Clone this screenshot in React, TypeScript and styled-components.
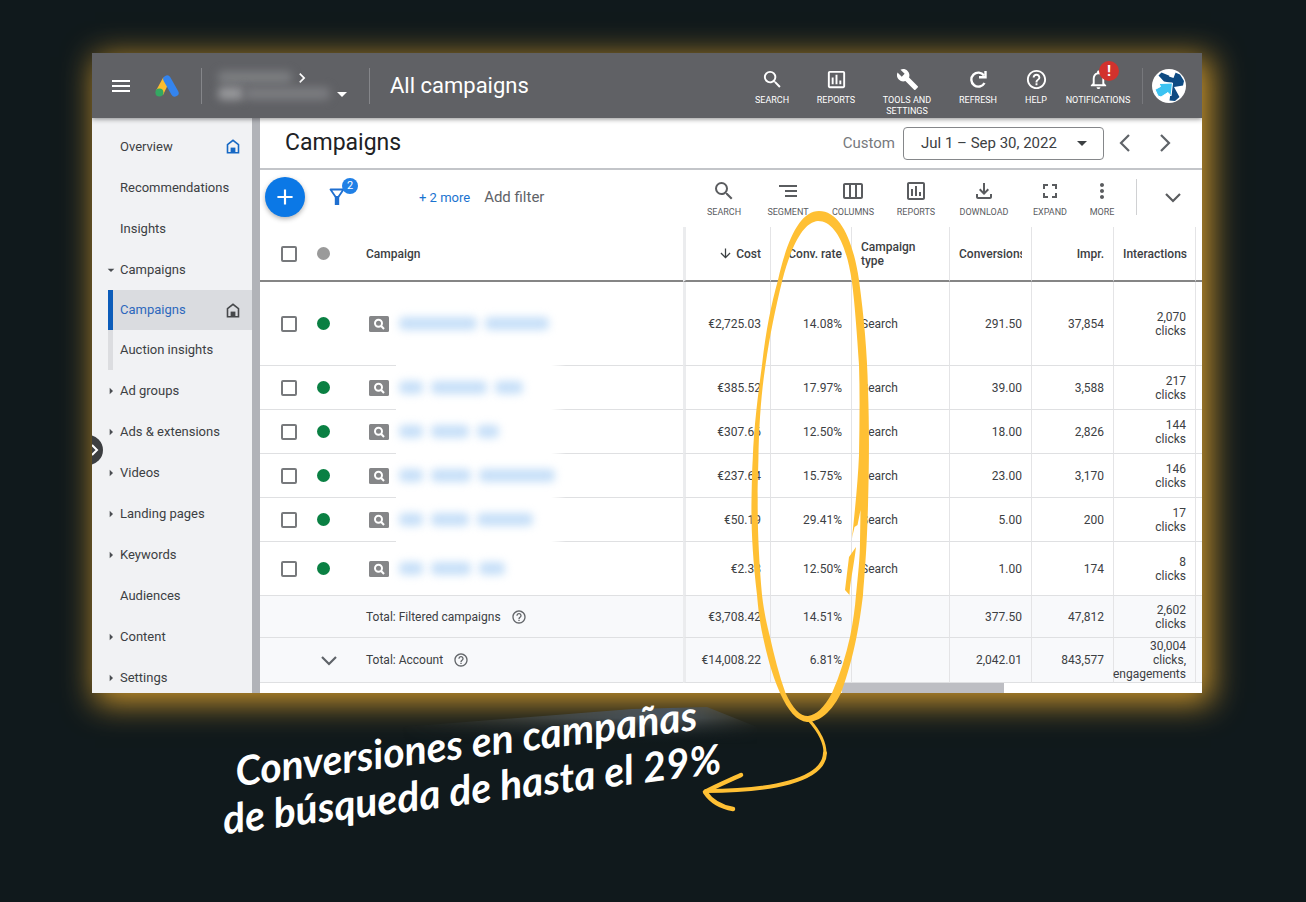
import React from "react";
import styled, { createGlobalStyle, css } from "styled-components";
import {
  MdSearch,
  MdOutlineAssessment,
  MdBuild,
  MdHelpOutline,
  MdNotificationsNone,
  MdSegment,
  MdOutlineViewWeek,
  MdOutlineFileDownload,
  MdFullscreen,
  MdMoreVert,
  MdChevronRight,
  MdArrowDropDown,
  MdArrowRight,
  MdArrowDownward,
  MdAdd,
  MdMenu,
} from "react-icons/md";

const GlobalStyle = createGlobalStyle`
  *, *::before, *::after { box-sizing: border-box; }
  body {
    margin: 0;
    background: #10191c;
    font-family: Roboto, "Liberation Sans", sans-serif;
    color: #3c4043;
  }
  button { font: inherit; color: inherit; background: none; border: 0; padding: 0; cursor: pointer; }
  a { color: inherit; text-decoration: none; }
`;

const Page = styled.div`
  min-height: 100vh;
  padding: 53px 104px 64px 92px;
  overflow: hidden;
`;

const Stage = styled.div`
  position: relative;
`;

const Card = styled.section`
  position: relative;
  overflow: hidden;
  background: #fff;
`;

const Glow = styled.div`
  box-shadow: 6px 7px 30px 3px rgba(222, 162, 46, 0.9);
`;

const Header = styled.header`
  position: relative;
  z-index: 1;
  display: flex;
  align-items: center;
  height: 65px;
  padding: 0 16px 0 17px;
  color: #fff;
  background: #606165;
  box-shadow: 0 1px 5px rgba(0, 0, 0, 0.45);
`;

const IconButton = styled.button`
  display: flex;
  align-items: center;
  justify-content: center;
  flex: none;
`;

const Logo = styled.a`
  display: flex;
  margin-left: 22px;
`;

const VLine = styled.span<{ $tint: string; $gap: string }>`
  flex: none;
  width: 1px;
  height: 36px;
  margin: ${(p) => p.$gap};
  background: ${(p) => p.$tint};
`;

const AccountButton = styled.button`
  display: grid;
  gap: 1px;
  width: 133px;
  text-align: left;
`;

const AccountLine = styled.span`
  display: flex;
  align-items: center;
  height: 15px;
`;

const Smudge = styled.span<{ $w: number; $tint: string }>`
  display: block;
  flex: none;
  width: ${(p) => p.$w}px;
  height: 13px;
  border-radius: 5px;
  background: ${(p) => p.$tint};
  filter: blur(4px);
`;

const HeaderTitle = styled.h1`
  flex: 1;
  margin: 0;
  font-size: 22px;
  font-weight: 400;
  line-height: 28px;
  white-space: nowrap;
`;

const Tools = styled.nav`
  display: flex;
  align-items: flex-start;
`;

const ToolButton = styled.button<{ $w: number }>`
  position: relative;
  display: flex;
  flex-direction: column;
  align-items: center;
  flex: none;
  gap: 4px;
  width: ${(p) => p.$w}px;
  font-size: 9px;
  line-height: 11px;
`;

const ToolLabel = styled.span<{ $w?: number }>`
  width: ${(p) => (p.$w ? `${p.$w}px` : "auto")};
  text-align: center;
`;

const HeaderTools = styled(Tools)`
  height: 65px;
  padding-top: 15px;
`;

const TableTools = styled(Tools)`
  padding-top: 3px;
`;

const Alert = styled.span`
  position: absolute;
  top: -7px;
  left: 37px;
  width: 20px;
  height: 20px;
  border-radius: 50%;
  background: #d2322d;
  font-size: 15px;
  font-weight: 700;
  line-height: 20px;
  text-align: center;
`;

const Body = styled.div`
  display: flex;
`;

const Sidebar = styled.nav`
  flex: none;
  width: 160px;
  margin-bottom: -5px;
  padding-top: 8px;
  background: #f1f2f4;
`;

const Gutter = styled.div`
  flex: none;
  width: 8px;
  background: #b1b3b8;
`;

const SideLink = styled.a<{ $kind?: "sub" | "active" }>`
  display: flex;
  align-items: center;
  height: 41px;
  padding: 0 12px 0 11px;
  font-size: 13px;
  line-height: 18px;
  ${(p) =>
    p.$kind &&
    css`
      height: 40px;
      margin-left: 16px;
      padding-left: 7px;
      border-left: 5px solid #dcdde0;
    `}
  ${(p) =>
    p.$kind === "active" &&
    css`
      color: #2d68bd;
      background: #dadce0;
      border-left-color: #0b5cba;
    `}
`;

const SideLabel = styled.span`
  flex: 1;
  white-space: nowrap;
`;

const Twist = styled.span`
  display: flex;
  flex: none;
  width: 17px;
  color: #4a4d51;
`;

const Handle = styled.button`
  position: absolute;
  z-index: 2;
  top: 382px;
  left: -19px;
  display: flex;
  align-items: center;
  justify-content: flex-end;
  width: 30px;
  height: 30px;
  padding-right: 4px;
  border-radius: 50%;
  background: #3c3e40;
  color: #fff;
`;

const Main = styled.main`
  flex: 1;
  min-width: 0;
  display: flex;
  flex-direction: column;
`;

const TitleBar = styled.div`
  display: flex;
  align-items: center;
  height: 52px;
  padding: 0 31px 0 25px;
  border-bottom: 2px solid #c3c5c9;
`;

const Title = styled.h2`
  flex: 1;
  margin: 0;
  color: #202124;
  font-size: 23px;
  font-weight: 400;
  line-height: 28px;
`;

const RangeLabel = styled.span`
  margin-right: 8px;
  color: #77797d;
  font-size: 15px;
`;

const RangeButton = styled.button`
  display: flex;
  align-items: center;
  justify-content: space-between;
  width: 201px;
  height: 33px;
  margin-right: 15px;
  padding: 0 9px 0 17px;
  border: 1px solid #85878a;
  border-radius: 4px;
  font-size: 15px;
  white-space: nowrap;
`;

const Steps = styled.div`
  display: flex;
  gap: 28px;
  color: #5f6368;
`;

const Toolbar = styled.div`
  display: flex;
  align-items: center;
  height: 57px;
  padding: 0 21px 3px 5px;
  color: #5a5c5f;
`;

const AddButton = styled.button`
  display: flex;
  align-items: center;
  justify-content: center;
  flex: none;
  width: 40px;
  height: 40px;
  border-radius: 50%;
  background: #0b78e6;
  color: #fff;
  box-shadow: 0 2px 5px rgba(0, 0, 0, 0.3);
`;

const FilterButton = styled.button`
  position: relative;
  display: flex;
  align-items: center;
  flex: none;
  width: 30px;
  height: 32px;
  margin-left: 24px;
`;

const Count = styled.span`
  position: absolute;
  top: -3px;
  left: 13px;
  width: 16px;
  height: 16px;
  border-radius: 50%;
  background: #2080e6;
  color: #fff;
  font-size: 11px;
  line-height: 16px;
`;

const MoreFilters = styled.button`
  margin-left: 60px;
  color: #1a73d0;
  font-size: 13px;
  white-space: nowrap;
`;

const AddFilter = styled.button`
  flex: 1;
  margin-left: 14px;
  color: #5f6368;
  font-size: 15px;
  text-align: left;
  white-space: nowrap;
`;

const Table = styled.table`
  width: 100%;
  table-layout: fixed;
  border-spacing: 0;
  font-size: 12px;
  line-height: 14px;
`;

const Row = styled.tr<{ $h: number; $total?: boolean }>`
  height: ${(p) => p.$h}px;
  background: ${(p) => (p.$total ? "#f8f9fb" : "#fff")};
`;

const cell = css<{ $left?: boolean; $bare?: boolean }>`
  padding: 0 9px;
  border-bottom: 1px solid #dfe0e2;
  border-left: ${(p) => (p.$bare ? "0" : "1px solid #e4e4e6")};
  text-align: ${(p) => (p.$left ? "left" : "right")};
  vertical-align: middle;
`;

const Td = styled.td`
  ${cell}
`;

const Th = styled.th`
  ${cell}
  border-bottom: 2px solid #858585;
  font-weight: 500;
  white-space: nowrap;
`;

const Clip = styled.span`
  display: block;
  overflow: hidden;
`;

const CostTd = styled(Td)`
  border-left: 3px solid #ebecee;
`;

const CostTh = styled(Th)`
  border-left: 3px solid #ebecee;
`;

const CostSort = styled.span`
  display: flex;
  align-items: center;
  justify-content: flex-end;
  gap: 3px;
`;

const CheckTd = styled(Td)`
  padding: 0 0 0 21px;
`;

const CheckTh = styled(Th)`
  padding: 0 0 0 21px;
`;

const DotTd = styled(Td)`
  padding: 0 0 0 11px;
`;

const DotTh = styled(Th)`
  padding: 0 0 0 11px;
`;

const CampaignTh = styled(Th)`
  padding-left: 25px;
`;

/* The rule under a hidden campaign name breaks where the name is masked. */
const NameTd = styled(Td)<{ $last: boolean }>`
  padding-left: 28px;
  ${(p) =>
    !p.$last &&
    css`
      border-bottom-color: transparent;
      background: linear-gradient(90deg, #dfe0e2 55px, transparent 55px, transparent 210px, #dfe0e2 225px)
        0 100% / 100% 1px no-repeat border-box;
    `}
`;

const TotalTd = styled(Td)`
  padding-left: 25px;
`;

const InteractTd = styled(Td)`
  padding-left: 0;
  > span { display: flex; justify-content: flex-end; text-align: right; }
`;

const NameLine = styled.div`
  display: flex;
  align-items: center;
`;

const Smudges = styled.a`
  display: flex;
  gap: 8px;
  margin-left: 10px;
`;

const Check = styled.input`
  display: block;
  appearance: none;
  width: 16px;
  height: 16px;
  margin: 0;
  border: 2px solid #77797c;
  border-radius: 2px;
  background: #fff;
`;

const Dot = styled.span<{ $tint: string }>`
  display: block;
  width: 13px;
  height: 13px;
  border-radius: 50%;
  background: ${(p) => p.$tint};
`;

const TotalName = styled.span`
  display: flex;
  align-items: center;
  gap: 10px;
  svg { color: #63666a; }
`;

const TotalToggle = styled.button`
  display: flex;
  margin-left: 4px;
  color: #5f6368;
`;

const Scroll = styled.div`
  height: 10px;
  padding: 0 198px 0 0;
`;

const Thumb = styled.div`
  width: 162px;
  height: 10px;
  margin-left: auto;
  background: #bdbec3;
`;

const Marker = styled.svg`
  position: absolute;
  z-index: 3;
  top: 147px;
  right: 322px;
  pointer-events: none;
`;

const Glint = styled.svg`
  position: absolute;
  top: 640px;
  right: 440px;
`;

const Caption = styled.p`
  position: relative;
  width: max-content;
  margin: 27px 0 0 126px;
  color: #fff;
  font-family: Lato, "Liberation Sans", sans-serif;
  font-size: 41px;
  font-style: italic;
  font-weight: 700;
  line-height: 46px;
  text-align: center;
  transform: rotate(-7deg);
  > span { display: block; white-space: nowrap; }
`;

const AdsLogo = () => (
  <svg width="24" height="22" viewBox="0 0 24 22" aria-hidden="true">
    <path d="M8.200 2.500 L14 7.500 L8 20 L0.800 16 Z" fill="#fbbc2f" />
    <path d="M12 4.200 L19.800 17.800" stroke="#3484ee" strokeWidth="7.600" strokeLinecap="round" />
    <circle cx="4.400" cy="17.600" r="4" fill="#34a862" />
  </svg>
);

const Avatar = () => (
  <svg width="34" height="34" viewBox="0 0 34 34" role="img" aria-label="Profile">
    <circle cx="17" cy="17" r="17" fill="#fff" />
    <path d="M6.500 6.500 L9.500 3.500 L18 7 L22 3 L28 5.500 L32 12 L31 16.500 L22 18 L27.500 28 L23 32 L17.500 31.500 L18.500 24 L20.500 14 L12 12.500 Z" fill="#0d4a82" />
    <path d="M17 7.500 L19.500 2 L24 2.500 L21.500 9 Z" fill="#fff" />
    <path d="M3 20.500 L8.500 17.500 L7 14.500 L20.500 14 L19 27 L16 23.500 L9 28 L6 27 Z" fill="#3cc3f2" stroke="#fff" strokeWidth="1" />
  </svg>
);

const RefreshIcon = () => (
  <svg width="23" height="23" viewBox="0 0 23 23" fill="none" aria-hidden="true">
    <path d="M17 7.500 A7 7 0 1 0 17.500 15" stroke="#fff" strokeWidth="2.400" />
    <path d="M18.500 3 V9.300 H12" stroke="#fff" strokeWidth="2.400" />
  </svg>
);

const Chevron = ({ dir }: { dir: "left" | "right" | "down" }) => {
  const down = dir === "down";
  const d = { left: "M10 1 L2 9 L10 17", right: "M2 1 L10 9 L2 17", down: "M1 2 L8 9 L15 2" }[dir];
  return (
    <svg width={down ? 16 : 12} height={down ? 11 : 18} viewBox={down ? "0 0 16 11" : "0 0 12 18"} fill="none" aria-hidden="true">
      <path d={d} stroke="currentColor" strokeWidth="2.200" />
    </svg>
  );
};

const HandleArrow = () => (
  <svg width="9" height="12" viewBox="0 0 9 12" fill="none" aria-hidden="true">
    <path d="M2 1 L7 6 L2 11" stroke="#fff" strokeWidth="2" />
  </svg>
);

const HomeIcon = ({ tint }: { tint: string }) => (
  <svg width="14" height="15" viewBox="0 0 14 15" fill="none" aria-hidden="true">
    <path d="M1.500 13.700 V5.600 L7 1.300 L12.500 5.600 V13.700 Z" stroke={tint} strokeWidth="1.600" />
    <path d="M4.600 14 V8.600 H9.400 V14 Z" fill={tint} />
  </svg>
);

const Funnel = () => (
  <svg width="17" height="18" viewBox="0 0 17 18" fill="none" aria-hidden="true">
    <path d="M1.500 1.500 H14.500 L9.500 8.800 H6.500 Z" stroke="#1f6fd0" strokeWidth="1.800" strokeLinejoin="round" />
    <path d="M5.800 8 H10.200 V17 H5.800 Z" fill="#1f6fd0" />
  </svg>
);

const SearchBadge = () => (
  <svg width="20" height="16" viewBox="0 0 20 16" fill="none" role="img" aria-label="Search campaign">
    <rect width="20" height="16" rx="1.500" fill="#858688" />
    <circle cx="9.500" cy="7.300" r="3.500" stroke="#fff" strokeWidth="2" />
    <path d="M12 9.800 L15 13" stroke="#fff" strokeWidth="2" />
  </svg>
);

const sideItems: { label: string; twist?: "open" | "closed"; kind?: "sub" | "active"; home?: string }[] = [
  { label: "Overview", home: "#1668c4" },
  { label: "Recommendations" },
  { label: "Insights" },
  { label: "Campaigns", twist: "open" },
  { label: "Campaigns", kind: "active", home: "#46484b" },
  { label: "Auction insights", kind: "sub" },
  { label: "Ad groups", twist: "closed" },
  { label: "Ads & extensions", twist: "closed" },
  { label: "Videos", twist: "closed" },
  { label: "Landing pages", twist: "closed" },
  { label: "Keywords", twist: "closed" },
  { label: "Audiences" },
  { label: "Content", twist: "closed" },
  { label: "Settings", twist: "closed" },
];

const rows = [
  { h: 84, name: [78, 64], cost: "€2,725.03", rate: "14.08%", conv: "291.50", impr: "37,854", inter: "2,070" },
  { h: 44, name: [24, 56, 28], cost: "€385.52", rate: "17.97%", conv: "39.00", impr: "3,588", inter: "217" },
  { h: 44, name: [24, 38, 22], cost: "€307.66", rate: "12.50%", conv: "18.00", impr: "2,826", inter: "144" },
  { h: 44, name: [24, 40, 76], cost: "€237.64", rate: "15.75%", conv: "23.00", impr: "3,170", inter: "146" },
  { h: 44, name: [24, 38, 56], cost: "€50.19", rate: "29.41%", conv: "5.00", impr: "200", inter: "17" },
  { h: 54, name: [24, 40, 26], cost: "€2.38", rate: "12.50%", conv: "1.00", impr: "174", inter: "8" },
];

export default function App() {
  return (
    <Page>
      <GlobalStyle />
      <Stage>
        <Glow>
          <Card>
            <Header>
              <IconButton aria-label="Menu">
                <MdMenu size={24} />
              </IconButton>
              <Logo href="#" aria-label="Ads home">
                <AdsLogo />
              </Logo>
              <VLine $tint="#85868a" $gap="0 16px 0 22px" />
              <AccountButton aria-label="Account">
                <AccountLine>
                  <Smudge $w={74} $tint="#7b7d80" />
                  <MdChevronRight size={20} />
                </AccountLine>
                <AccountLine>
                  <Smudge $w={26} $tint="#97989b" />
                  <Smudge $w={86} $tint="#7a7b7f" />
                  <MdArrowDropDown size={24} />
                </AccountLine>
              </AccountButton>
              <VLine $tint="#85868a" $gap="0 20px 0 18px" />
              <HeaderTitle>All campaigns</HeaderTitle>
              <HeaderTools aria-label="Account tools">
                <ToolButton $w={64}>
                  <MdSearch size={23} />
                  <ToolLabel>SEARCH</ToolLabel>
                </ToolButton>
                <ToolButton $w={64}>
                  <MdOutlineAssessment size={23} />
                  <ToolLabel>REPORTS</ToolLabel>
                </ToolButton>
                <ToolButton $w={78}>
                  <MdBuild size={23} />
                  <ToolLabel $w={56}>TOOLS AND SETTINGS</ToolLabel>
                </ToolButton>
                <ToolButton $w={64}>
                  <RefreshIcon />
                  <ToolLabel>REFRESH</ToolLabel>
                </ToolButton>
                <ToolButton $w={52}>
                  <MdHelpOutline size={23} />
                  <ToolLabel>HELP</ToolLabel>
                </ToolButton>
                <ToolButton $w={72}>
                  <MdNotificationsNone size={23} />
                  <Alert>!</Alert>
                  <ToolLabel>NOTIFICATIONS</ToolLabel>
                </ToolButton>
              </HeaderTools>
              <VLine $tint="#77787c" $gap="0 9px 0 8px" />
              <IconButton aria-label="Profile">
                <Avatar />
              </IconButton>
            </Header>
            <Body>
              <Sidebar aria-label="Sections">
                {sideItems.map((item, i) => (
                  <SideLink key={i} href="#" $kind={item.kind}>
                    {!item.kind && (
                      <Twist>
                        {item.twist === "open" && <MdArrowDropDown size={16} />}
                        {item.twist === "closed" && <MdArrowRight size={16} />}
                      </Twist>
                    )}
                    <SideLabel>{item.label}</SideLabel>
                    {item.home && <HomeIcon tint={item.home} />}
                  </SideLink>
                ))}
              </Sidebar>
              <Gutter />
              <Main>
                <TitleBar>
                  <Title>Campaigns</Title>
                  <RangeLabel>Custom</RangeLabel>
                  <RangeButton>
                    Jul 1 – Sep 30, 2022
                    <MdArrowDropDown size={24} />
                  </RangeButton>
                  <Steps>
                    <IconButton aria-label="Previous period">
                      <Chevron dir="left" />
                    </IconButton>
                    <IconButton aria-label="Next period">
                      <Chevron dir="right" />
                    </IconButton>
                  </Steps>
                </TitleBar>
                <Toolbar>
                  <AddButton aria-label="New campaign">
                    <MdAdd size={26} />
                  </AddButton>
                  <FilterButton aria-label="Filters">
                    <Funnel />
                    <Count>2</Count>
                  </FilterButton>
                  <MoreFilters>+ 2 more</MoreFilters>
                  <AddFilter>Add filter</AddFilter>
                  <TableTools aria-label="Table tools">
                    <ToolButton $w={64}>
                      <MdSearch size={24} />
                      <ToolLabel>SEARCH</ToolLabel>
                    </ToolButton>
                    <ToolButton $w={64}>
                      <MdSegment size={24} />
                      <ToolLabel>SEGMENT</ToolLabel>
                    </ToolButton>
                    <ToolButton $w={66}>
                      <MdOutlineViewWeek size={24} />
                      <ToolLabel>COLUMNS</ToolLabel>
                    </ToolButton>
                    <ToolButton $w={60}>
                      <MdOutlineAssessment size={24} />
                      <ToolLabel>REPORTS</ToolLabel>
                    </ToolButton>
                    <ToolButton $w={76}>
                      <MdOutlineFileDownload size={24} />
                      <ToolLabel>DOWNLOAD</ToolLabel>
                    </ToolButton>
                    <ToolButton $w={56}>
                      <MdFullscreen size={24} />
                      <ToolLabel>EXPAND</ToolLabel>
                    </ToolButton>
                    <ToolButton $w={48}>
                      <MdMoreVert size={24} />
                      <ToolLabel>MORE</ToolLabel>
                    </ToolButton>
                  </TableTools>
                  <VLine $tint="#d0d1d3" $gap="0 28px 0 10px" />
                  <IconButton aria-label="Collapse toolbar">
                    <Chevron dir="down" />
                  </IconButton>
                </Toolbar>
                <Table>
                  <colgroup>
                    <col style={{ width: 46 }} />
                    <col style={{ width: 35 }} />
                    <col />
                    <col style={{ width: 87 }} />
                    <col style={{ width: 81 }} />
                    <col style={{ width: 98 }} />
                    <col style={{ width: 82 }} />
                    <col style={{ width: 82 }} />
                    <col style={{ width: 82 }} />
                    <col style={{ width: 7 }} />
                  </colgroup>
                  <thead>
                    <Row $h={55}>
                      <CheckTh $bare>
                        <Check type="checkbox" aria-label="Select all campaigns" />
                      </CheckTh>
                      <DotTh $bare>
                        <Dot $tint="#9a9a9a" />
                      </DotTh>
                      <CampaignTh $bare $left>
                        Campaign
                      </CampaignTh>
                      <CostTh>
                        <CostSort>
                          <MdArrowDownward size={15} />
                          Cost
                        </CostSort>
                      </CostTh>
                      <Th>Conv. rate</Th>
                      <Th $left>
                        Campaign
                        <br />
                        type
                      </Th>
                      <Th $left>
                        <Clip>Conversions</Clip>
                      </Th>
                      <Th>Impr.</Th>
                      <Th>Interactions</Th>
                      <Th aria-hidden="true" />
                    </Row>
                  </thead>
                  <tbody>
                    {rows.map((r, i) => (
                      <Row key={i} $h={r.h}>
                        <CheckTd $bare>
                          <Check type="checkbox" aria-label={`Select campaign ${i + 1}`} />
                        </CheckTd>
                        <DotTd $bare>
                          <Dot $tint="#0a8043" />
                        </DotTd>
                        <NameTd $bare $left $last={i === rows.length - 1}>
                          <NameLine>
                            <SearchBadge />
                            <Smudges href="#" aria-label={`Campaign ${i + 1}`}>
                              {r.name.map((w, k) => (
                                <Smudge key={k} $w={w} $tint="#c6dff8" />
                              ))}
                            </Smudges>
                          </NameLine>
                        </NameTd>
                        <CostTd>{r.cost}</CostTd>
                        <Td>{r.rate}</Td>
                        <Td $left>Search</Td>
                        <Td>{r.conv}</Td>
                        <Td>{r.impr}</Td>
                        <Td>
                          {r.inter}
                          <br />
                          clicks
                        </Td>
                        <Td />
                      </Row>
                    ))}
                  </tbody>
                  <tfoot>
                    <Row $h={42} $total>
                      <Td $bare />
                      <Td $bare />
                      <TotalTd $bare $left>
                        <TotalName>
                          Total: Filtered campaigns <MdHelpOutline size={16} />
                        </TotalName>
                      </TotalTd>
                      <CostTd>€3,708.42</CostTd>
                      <Td>14.51%</Td>
                      <Td />
                      <Td>377.50</Td>
                      <Td>47,812</Td>
                      <Td>
                        2,602
                        <br />
                        clicks
                      </Td>
                      <Td />
                    </Row>
                    <Row $h={45} $total>
                      <Td $bare />
                      <DotTd $bare>
                        <TotalToggle aria-label="Expand account total">
                          <Chevron dir="down" />
                        </TotalToggle>
                      </DotTd>
                      <TotalTd $bare $left>
                        <TotalName>
                          Total: Account <MdHelpOutline size={16} />
                        </TotalName>
                      </TotalTd>
                      <CostTd>€14,008.22</CostTd>
                      <Td>6.81%</Td>
                      <Td />
                      <Td>2,042.01</Td>
                      <Td>843,577</Td>
                      <InteractTd>
                        <span>
                          30,004
                          <br />
                          clicks,
                          <br />
                          engagements
                        </span>
                      </InteractTd>
                      <Td />
                    </Row>
                  </tfoot>
                </Table>
                <Scroll>
                  <Thumb />
                </Scroll>
              </Main>
            </Body>
            <Handle aria-label="Expand navigation">
              <HandleArrow />
            </Handle>
          </Card>
        </Glow>
        <Glint width="360" height="60" viewBox="0 0 360 60" aria-hidden="true">
          <defs>
            <linearGradient id="glintFade" x1="0" y1="0" x2="0" y2="1">
              <stop offset="0.250" stopColor="#4a545d" />
              <stop offset="0.850" stopColor="#10191c" stopOpacity="0" />
            </linearGradient>
            <linearGradient id="glintSide" x1="0" y1="0" x2="1" y2="0">
              <stop offset="0" stopColor="#000" />
              <stop offset="0.750" stopColor="#fff" />
              <stop offset="1" stopColor="#000" />
            </linearGradient>
            <mask id="glintMask">
              <rect width="360" height="60" fill="url(#glintSide)" />
            </mask>
          </defs>
          <path d="M0 34 L230 16 L305 14 L355 34 L355 58 L0 58 Z" fill="url(#glintFade)" mask="url(#glintMask)" />
        </Glint>
        <Marker width="190" height="620" viewBox="690 200 190 620" fill="#ffc034" aria-hidden="true">
          <path
            fillRule="evenodd"
            d="M819 211 C840 211 853 240 859 280 C864 318 867 350 868 390 C869.500 430 869 470 868 505 C867 545 865 570 863 595 C860 620 855 655 841 693 C829 717 816 722 807 722 C797 721 788 711 780 693 C771 672 767 655 763 637 C759 618 758 606 757 595 C753 560 751 530 751.500 500 C752 480 752 470 752.700 460 C754 425 758 395 762 365 C766 330 771 305 778 280 C787 240 800 211 819 211 Z
               M818 221 C803 222 791 247 782.400 280 C775 310 770 335 765.500 365 C761 395 759 425 758.400 460 C758 475 757.500 490 757.700 500 C757.500 530 759 560 762 595 C764 612 767 625 770 637 C774 655 779 675 785.500 693 C793 709 800 716 808 716 C816 715 824 708 832 693 C840 675 846 655 850 637 C853 622 855 608 856 595 C858 575 860 558 860 541 L860.500 510 L857.500 525 L854.500 527 L852 538 C855 510 858 480 859 455 C859.500 425 860 395 859 365 C857 335 855 305 851.700 280 C846 243 834 221 818 221 Z"
          />
          <path d="M856 547 L849 557 L845 590 L849.500 595 C850 582 854 565 856 547 Z" />
          <g fill="none" stroke="#ffc034" strokeLinecap="round">
            <path d="M809 720 C818 730 825 741 825 753" strokeWidth="3" />
            <path d="M825 753 C824 781 770 791 706 791" strokeWidth="4" />
            <path d="M741 775 C728 781 716 786 705 792 C711 801 721 807 733 809" strokeWidth="4.500" strokeLinejoin="round" />
          </g>
        </Marker>
        <Caption>
          <span>Conversiones en campañas</span>
          <span>de búsqueda de hasta el 29%</span>
        </Caption>
      </Stage>
    </Page>
  );
}
